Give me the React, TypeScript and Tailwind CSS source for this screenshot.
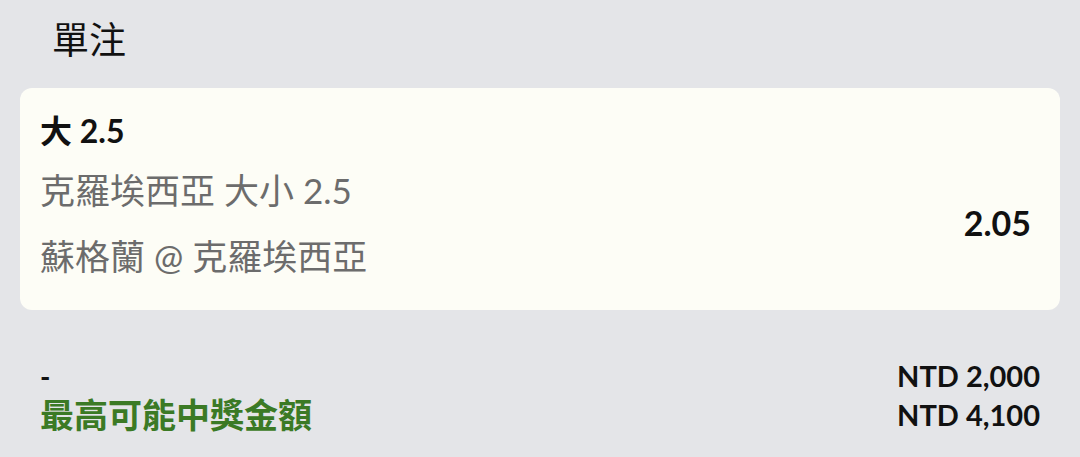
const latin = "font-['Lato','Noto_Sans_CJK_TC',sans-serif]";

export default function App() {
  return (
    <div className={`w-[1080px] h-[457px] bg-[#e4e5e8] overflow-hidden ${latin}`}>
      <div className="pl-[52px] pt-[16px] h-[88px]">
        <h1 className="text-[37px] leading-[48px] text-[#111] font-normal">單注</h1>
      </div>
      <div className="mx-[20px] w-[1040px] h-[222px] rounded-[12px] bg-[#fdfdf6] pl-[20px] pr-[29px] pt-[23px]">
        <div className="text-[32px] leading-[40px] font-bold text-[#111]">大 2.5</div>
        <div className="mt-[19px] flex items-center">
          <div className="flex-1 flex flex-col gap-[26px]">
            <div className="text-[35px] leading-[40px] text-[#6c6c6c]">克羅埃西亞 大小 2.5</div>
            <div className="text-[35px] leading-[40px] text-[#6c6c6c]">蘇格蘭 @ 克羅埃西亞</div>
          </div>
          <div className="text-[34px] leading-[40px] font-bold text-[#111]">2.05</div>
        </div>
      </div>
      <div className="mt-[47px] px-[40px] grid grid-cols-[1fr_auto]">
        <div className="text-[28px] leading-[38px] font-bold text-[#111]">-</div>
        <div className="text-[29px] leading-[38px] font-bold text-[#111] text-right">NTD 2,000</div>
        <div className="text-[34px] leading-[40px] font-bold text-[#3b7a25]">最高可能中獎金額</div>
        <div className="text-[29px] leading-[40px] font-bold text-[#111] text-right">NTD 4,100</div>
      </div>
    </div>
  );
}
